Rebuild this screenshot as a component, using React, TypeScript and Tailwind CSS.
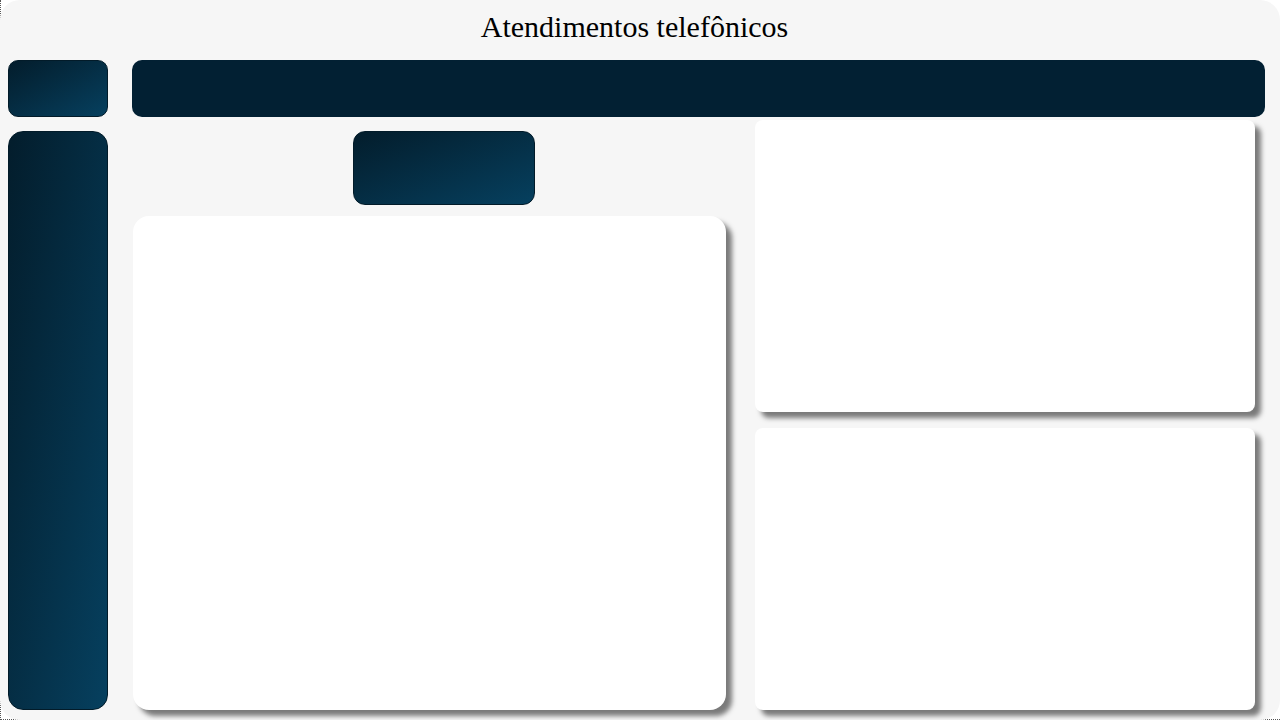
import React from "react";

export default function App() {
  return (
    <div className="w-[1280px] h-[720px] bg-white relative border-l border-b border-dotted border-[#555] box-border">
      <div className="absolute left-[-1px] top-0 w-[1280px] h-[720px] rounded-[20px] bg-[#f6f6f6]">
        <div className="h-[60px] pt-[10px] pr-[11px] text-center text-[30px] leading-[34px] text-black" style={{ fontFamily: '"Liberation Serif", "Times New Roman", serif' }}>
          Atendimentos telefônicos
        </div>
        <div className="flex pl-[8px] gap-[24px]">
          <div className="w-[100px] flex flex-col gap-[14px]">
            <div className="h-[57px] rounded-[10px] border border-[#021b29] bg-gradient-to-br from-[#031d2c] to-[#06405f]" />
            <div className="h-[579px] rounded-[15px] border border-[#021b29] bg-gradient-to-br from-[#031d2c] to-[#06405f]" />
          </div>
          <div className="w-[1133px] flex flex-col">
            <div className="h-[57px] rounded-[10px] bg-[#022033]" />
            <div className="flex mt-[3px]">
              <div className="w-[623px] flex flex-col">
                <div className="mt-[11px] ml-[221px] w-[182px] h-[74px] rounded-[12px] border border-[#021b29] bg-gradient-to-br from-[#031d2c] to-[#06405f]" />
                <div className="mt-[11px] ml-[1px] w-[593px] h-[494px] rounded-[16px] bg-white shadow-[6px_6px_5px_#7a7a7a]" />
              </div>
              <div className="w-[500px] flex flex-col gap-[16px]">
                <div className="h-[292px] rounded-[8px] bg-white shadow-[6px_6px_5px_#7a7a7a]" />
                <div className="h-[282px] rounded-[8px] bg-white shadow-[6px_6px_5px_#7a7a7a]" />
              </div>
            </div>
          </div>
        </div>
      </div>
    </div>
  );
}
